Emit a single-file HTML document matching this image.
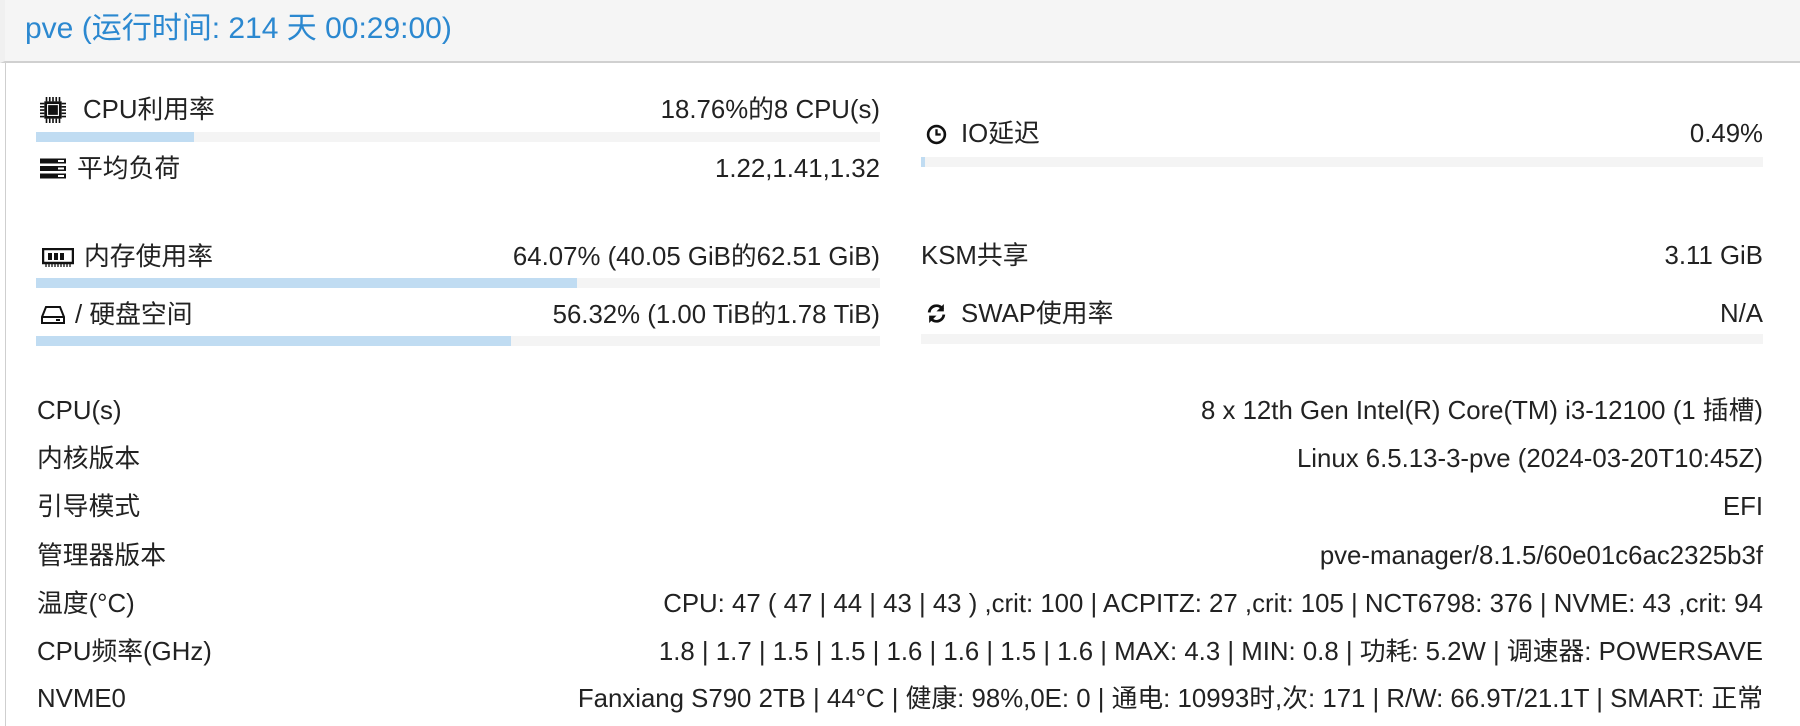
<!DOCTYPE html>
<html><head><meta charset="utf-8"><style>
*{margin:0;padding:0;box-sizing:border-box}
body{width:1800px;height:726px;background:#fff;font-family:"Liberation Sans","Noto Sans CJK SC",sans-serif;color:#222;overflow:hidden;position:relative}
.hdr{position:absolute;left:0;top:0;width:1800px;height:63px;background:#f5f5f5;border-bottom:2px solid #d0d0d0;border-left:5px solid #f0f0f0}
.hdr span{position:absolute;left:20px;top:3px;font-size:30px;color:#2b88d0}
.lb{position:absolute;left:5px;top:63px;width:1px;height:663px;background:#cfcfcf}
.t{position:absolute;font-size:25.8px;line-height:30px;white-space:nowrap}
.r{text-align:right}
.bar{position:absolute;height:10px;background:#f4f4f4}
.bar i{display:block;height:100%;background:#c0dcf2}
svg{position:absolute}
</style></head><body>
<div class="hdr"><span>pve (运行时间: 214 天 00:29:00)</span></div>
<div class="lb"></div>

<svg style="left:40px;top:97px" width="26" height="26" viewBox="0 0 24 24"><rect x="4" y="4" width="16" height="16" fill="#111"/><rect x="7" y="7" width="10" height="10" fill="#111" stroke="#fff" stroke-width="1"/><g stroke="#111" stroke-width="1.5"><path d="M6 0v4M9 0v4M12 0v4M15 0v4M18 0v4M6 20v4M9 20v4M12 20v4M15 20v4M18 20v4M0 6h4M0 9h4M0 12h4M0 15h4M0 18h4M20 6h4M20 9h4M20 12h4M20 15h4M20 18h4"/></g></svg>
<div class="t" style="left:83px;top:95px">CPU利用率</div>
<div class="t r" style="right:920px;top:95px">18.76%的8 CPU(s)</div>
<div class="bar" style="left:36px;top:132px;width:844px"><i style="width:158px"></i></div>

<svg style="left:40px;top:158px" width="26" height="21" viewBox="0 0 26 20"><g fill="#111"><rect x="0" y="0" width="26" height="5"/><rect x="0" y="7.5" width="26" height="5"/><rect x="0" y="15" width="26" height="5"/></g><g fill="#fff"><rect x="18" y="1.5" width="6" height="2"/><rect x="18" y="9" width="6" height="2"/><rect x="18" y="16.5" width="6" height="2"/></g></svg>
<div class="t" style="left:77px;top:154px">平均负荷</div>
<div class="t r" style="right:920px;top:154px">1.22,1.41,1.32</div>

<svg style="left:42px;top:248px" width="32" height="20" viewBox="0 0 32 20"><rect x="1" y="1" width="30" height="14" fill="none" stroke="#111" stroke-width="2.5"/><rect x="6" y="5" width="4" height="7" fill="#111"/><rect x="12" y="5" width="4" height="7" fill="#111"/><rect x="18" y="5" width="4" height="7" fill="#111"/><g stroke="#111" stroke-width="1.3"><path d="M4 15v4M7 15v4M10 15v4M13 15v4M16 15v4M19 15v4M22 15v4M25 15v4M28 15v4"/></g></svg>
<div class="t" style="left:84px;top:242px">内存使用率</div>
<div class="t r" style="right:920px;top:242px">64.07% (40.05 GiB的62.51 GiB)</div>
<div class="bar" style="left:36px;top:278px;width:844px"><i style="width:541px"></i></div>

<svg style="left:41px;top:305px" width="24" height="20" viewBox="0 0 24 20"><path d="M5 2h14l4 10v6H1v-6z" fill="none" stroke="#111" stroke-width="2"/><path d="M1 12h22" stroke="#111" stroke-width="2"/><rect x="15" y="14" width="4" height="2" fill="#111"/></svg>
<div class="t" style="left:75px;top:300px">/ 硬盘空间</div>
<div class="t r" style="right:920px;top:300px">56.32% (1.00 TiB的1.78 TiB)</div>
<div class="bar" style="left:36px;top:336px;width:844px"><i style="width:475px"></i></div>

<svg style="left:926px;top:124px" width="21" height="21" viewBox="0 0 20 20"><circle cx="10" cy="10" r="8" fill="none" stroke="#111" stroke-width="2.5"/><path d="M10 5v5h4" fill="none" stroke="#111" stroke-width="2.2"/></svg>
<div class="t" style="left:961px;top:119px">IO延迟</div>
<div class="t r" style="right:37px;top:119px">0.49%</div>
<div class="bar" style="left:921px;top:157px;width:842px"><i style="width:4px"></i></div>

<div class="t" style="left:921px;top:241px">KSM共享</div>
<div class="t r" style="right:37px;top:241px">3.11 GiB</div>

<svg style="left:926px;top:303px" width="21" height="21" viewBox="0 0 20 20"><path d="M3 9A7 7 0 0 1 16 6" fill="none" stroke="#111" stroke-width="2.6"/><path d="M17 1v7h-7z" fill="#111"/><path d="M17 11A7 7 0 0 1 4 14" fill="none" stroke="#111" stroke-width="2.6"/><path d="M3 19v-7h7z" fill="#111"/></svg>
<div class="t" style="left:961px;top:299px">SWAP使用率</div>
<div class="t r" style="right:37px;top:299px">N/A</div>
<div class="bar" style="left:921px;top:334px;width:842px"></div>

<div class="t" style="left:37px;top:396px">CPU(s)</div>
<div class="t r" style="right:37px;top:396px">8 x 12th Gen Intel(R) Core(TM) i3-12100 (1 插槽)</div>
<div class="t" style="left:37px;top:444px">内核版本</div>
<div class="t r" style="right:37px;top:444px">Linux 6.5.13-3-pve (2024-03-20T10:45Z)</div>
<div class="t" style="left:37px;top:492px">引导模式</div>
<div class="t r" style="right:37px;top:492px">EFI</div>
<div class="t" style="left:37px;top:541px">管理器版本</div>
<div class="t r" style="right:37px;top:541px">pve-manager/8.1.5/60e01c6ac2325b3f</div>
<div class="t" style="left:37px;top:589px">温度(°C)</div>
<div class="t r" style="right:37px;top:589px">CPU: 47 ( 47 | 44 | 43 | 43 ) ,crit: 100 | ACPITZ: 27 ,crit: 105 | NCT6798: 376 | NVME: 43 ,crit: 94</div>
<div class="t" style="left:37px;top:637px">CPU频率(GHz)</div>
<div class="t r" style="right:37px;top:637px">1.8 | 1.7 | 1.5 | 1.5 | 1.6 | 1.6 | 1.5 | 1.6 | MAX: 4.3 | MIN: 0.8 | 功耗: 5.2W | 调速器: POWERSAVE</div>
<div class="t" style="left:37px;top:684px">NVME0</div>
<div class="t r" style="right:37px;top:684px">Fanxiang S790 2TB | 44°C | 健康: 98%,0E: 0 | 通电: 10993时,次: 171 | R/W: 66.9T/21.1T | SMART: 正常</div>
</body></html>
